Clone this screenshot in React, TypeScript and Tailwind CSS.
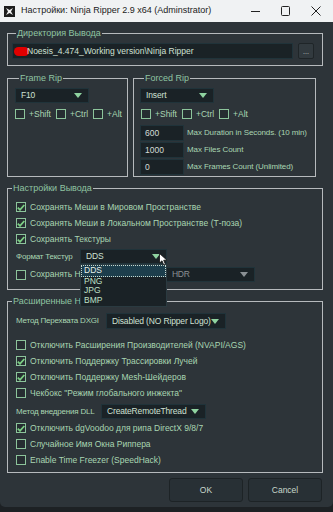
import { ReactNode } from 'react';

const font = { fontFamily: '"Liberation Sans", Arial, sans-serif' };

const Arrow = ({ gray = false }: { gray?: boolean }) => (
  <svg width="8" height="5" viewBox="0 0 8 5" className="shrink-0">
    <path d="M0 0 H8 L4 5 Z" fill={gray ? '#8a9094' : '#8fd3a0'} />
  </svg>
);

const Check = ({ checked = false }: { checked?: boolean }) => (
  <span className="flex h-[10px] w-[10px] shrink-0 items-center justify-center border border-[#8cc49b] bg-[#262d31]">
    {checked && (
      <svg width="8" height="7" viewBox="0 0 8 7">
        <path d="M0.8 3.6 L3 5.8 L7.3 1" stroke="#7ccf84" strokeWidth="1.8" fill="none" />
      </svg>
    )}
  </span>
);

const CheckRow = ({ label, checked = false }: { label: string; checked?: boolean }) => (
  <div className="flex h-[12px] items-center gap-[4px] pl-[8px]">
    <Check checked={checked} />
    <span className="whitespace-nowrap text-[8.5px] text-[#a9d6b2]">{label}</span>
  </div>
);

const Select = ({ value, className, gray = false }: { value: string; className: string; gray?: boolean }) => (
  <div className={`flex shrink-0 items-center justify-between border border-[#20333a] bg-[#1a2226] pl-[5px] pr-[6px] ${className}`}>
    <span className={`whitespace-nowrap text-[8.5px] tracking-[-0.15px] ${gray ? 'text-[#8a9094]' : 'text-[#cfe0d3]'}`}>{value}</span>
    <Arrow gray={gray} />
  </div>
);

const Field = ({ value }: { value: string }) => (
  <div className="flex h-[16px] w-[44px] shrink-0 items-center border border-[#20333a] bg-[#1a2226] pl-[4px] text-[8.5px] text-[#d3ddd6]">
    {value}
  </div>
);

const Group = ({ title, className = '', children }: { title: string; className?: string; children: ReactNode }) => (
  <fieldset className={`min-w-0 border border-[#b6babd] ${className}`}>
    <legend className="ml-[4px] px-[1px] text-[9px] leading-[10px] text-[#8fc4a2]">{title}</legend>
    {children}
  </fieldset>
);

const Mods = () => (
  <div className="flex h-[10px] items-center gap-[4px] text-[8.5px] text-[#a9d6b2]">
    <Check />
    <span className="w-[23px]">+Shift</span>
    <Check />
    <span className="w-[19px]">+Ctrl</span>
    <Check />
    <span>+Alt</span>
  </div>
);

export default function App() {
  return (
    <div className="flex h-[512px] w-[333px] flex-col overflow-hidden bg-[#1d2124]" style={font}>
      <div className="flex h-[22px] shrink-0 items-center bg-[#f0f2f3] pl-[4px] text-[#1b1b1b]">
        <svg width="11" height="11" viewBox="0 0 11 11" className="mr-[6px]">
          <rect width="11" height="11" fill="#1d1d1d" />
          <path d="M2 2 L5.5 4 L9 2 L7 5.5 L9 9 L5.5 7 L2 9 L4 5.5 Z" fill="#f2f2f2" />
        </svg>
        <span className="whitespace-nowrap text-[9px]">Настройки: Ninja Ripper 2.9 x64 (Adminstrator)</span>
        <div className="ml-auto flex items-center pr-[2px]">
          <svg width="30" height="22" viewBox="0 0 30 22">
            <path d="M10 11.5 H19" stroke="#222" strokeWidth="1" />
          </svg>
          <svg width="30" height="22" viewBox="0 0 30 22">
            <rect x="10.5" y="6.5" width="8" height="9" rx="1" stroke="#222" strokeWidth="1" fill="none" />
          </svg>
          <svg width="30" height="22" viewBox="0 0 30 22">
            <path d="M10.5 6.5 L19.5 15.5 M19.5 6.5 L10.5 15.5" stroke="#222" strokeWidth="1" />
          </svg>
        </div>
      </div>

      <div className="flex h-[485px] shrink-0 flex-col rounded-b-[5px] bg-[#2d3439] pl-[7px] pr-[10px] pt-[6px]">
        <Group title="Директория Вывода" className="pb-[6px] pl-[4px] pr-[8px] pt-[5px]">
          <div className="flex items-center gap-[5px]">
            <div className="flex h-[16px] flex-1 items-center border border-[#20333a] bg-[#1a2226] pl-[1px]">
              <span className="mr-[-2px] h-[9px] w-[15px] rounded-full bg-[#e10000]" />
              <span className="whitespace-nowrap text-[8.5px] text-[#cfe0d3]">Noesis_4.474_Working version\Ninja Ripper</span>
            </div>
            <div className="flex h-[16px] w-[16px] items-end justify-center rounded-[2px] border border-[#1f2528] bg-[#323a3f] pb-[3px] text-[7px] leading-[7px] text-[#c8d0cc]">
              ...
            </div>
          </div>
        </Group>

        <div className="mt-[7px] grid grid-cols-[121px_183px] gap-[5px]">
          <Group title="Frame Rip" className="pl-[7px] pt-[5px]">
            <Select value="F10" className="h-[15px] w-[74px]" />
            <div className="mt-[6px]">
              <Mods />
            </div>
          </Group>
          <Group title="Forced Rip" className="pb-[1px] pl-[6px] pt-[5px]">
            <Select value="Insert" className="h-[15px] w-[74px]" />
            <div className="mt-[6px] pl-[1px]">
              <Mods />
            </div>
            <div className="mt-[6px] flex flex-col gap-[1px]">
              {[
                ['600', 'Max Duration in Seconds. (10 min)'],
                ['1000', 'Max Files Count'],
                ['0', 'Max Frames Count (Unlimited)'],
              ].map(([v, l]) => (
                <div key={l} className="flex items-center gap-[3px]">
                  <Field value={v} />
                  <span className="whitespace-nowrap text-[8px] tracking-[-0.1px] text-[#a9d6b2]">{l}</span>
                </div>
              ))}
            </div>
          </Group>
        </div>

        <Group title="Настройки Вывода" className="mt-[6px] pb-[7px] pt-[8px]">
          <div className="flex flex-col gap-[4px]">
            <CheckRow checked label="Сохранять Меши в Мировом Пространстве" />
            <CheckRow checked label="Сохранять Меши в Локальном Пространстве (Т-поза)" />
            <CheckRow checked label="Сохранять Текстуры" />
          </div>
          <div className="relative mt-[4px] flex items-center pl-[8px]">
            <span className="w-[64px] whitespace-nowrap text-[8px] tracking-[-0.2px] text-[#a9d6b2]">Формат Текстур</span>
            <Select value="DDS" className="h-[15px] w-[87px]" />
            <svg width="9" height="13" viewBox="0 0 9 13" className="absolute left-[151px] top-[4px] z-20">
              <path d="M0.5 0.5 L0.5 10 L3 7.8 L4.8 12 L6.4 11.3 L4.7 7.2 L8 7.2 Z" fill="#fff" stroke="#111" strokeWidth="0.8" />
            </svg>
            <div className="absolute left-[72px] top-[15px] z-10 w-[87px] border border-[#2a3a40] bg-[#1a2226] text-[8.5px] leading-[9.5px] text-[#bfe0c8]">
              <div className="border border-dotted border-[#c8d8cf] bg-[#1d3e4c] pl-[2px] text-[#e6f0ea]">DDS</div>
              <div className="pl-[3px]">PNG</div>
              <div className="pl-[3px]">JPG</div>
              <div className="pb-[1px] pl-[3px]">BMP</div>
            </div>
          </div>
          <div className="mt-[3px] flex items-center">
            <CheckRow label="Сохранять HDR" />
            <Select value="HDR" gray className="ml-[73px] h-[15px] w-[89px]" />
          </div>
        </Group>

        <Group title="Расширенные Настройки" className="mt-[6px] pb-[6px] pt-[7px]">
          <div className="flex items-center pl-[8px]">
            <span className="w-[90px] whitespace-nowrap text-[8px] tracking-[-0.2px] text-[#a9d6b2]">Метод Перехвата DXGI</span>
            <Select value="Disabled (NO Ripper Logo)" className="h-[16px] w-[120px]" />
          </div>
          <div className="mt-[10px] flex flex-col gap-[4px]">
            <CheckRow label="Отключить Расширения Производителей (NVAPI/AGS)" />
            <CheckRow checked label="Отключить Поддержку Трассировки Лучей" />
            <CheckRow checked label="Отключить Поддержку Mesh-Шейдеров" />
            <CheckRow label='Чекбокс "Режим глобального инжекта"' />
          </div>
          <div className="mt-[5px] flex items-center pl-[8px]">
            <span className="w-[85px] whitespace-nowrap text-[8px] tracking-[-0.2px] text-[#a9d6b2]">Метод внедрения DLL</span>
            <Select value="CreateRemoteThread" className="h-[15px] w-[105px]" />
          </div>
          <div className="mt-[3px] flex flex-col gap-[4px]">
            <CheckRow checked label="Отключить dgVoodoo для рипа DirectX 9/8/7" />
            <CheckRow label="Случайное Имя Окна Риппера" />
            <CheckRow label="Enable Time Freezer (SpeedHack)" />
          </div>
        </Group>

        <div className="mt-[5px] flex justify-end gap-[5px] pr-[1px]">
          <button className="flex h-[24px] w-[74px] items-center justify-center rounded-[3px] border border-[#1d2326] bg-[#283035] text-[8.5px] text-[#c8d8cc]">
            OK
          </button>
          <button className="flex h-[24px] w-[74px] items-center justify-center rounded-[3px] border border-[#1d2326] bg-[#283035] text-[8.5px] text-[#c8d8cc]">
            Cancel
          </button>
        </div>
      </div>
    </div>
  );
}
